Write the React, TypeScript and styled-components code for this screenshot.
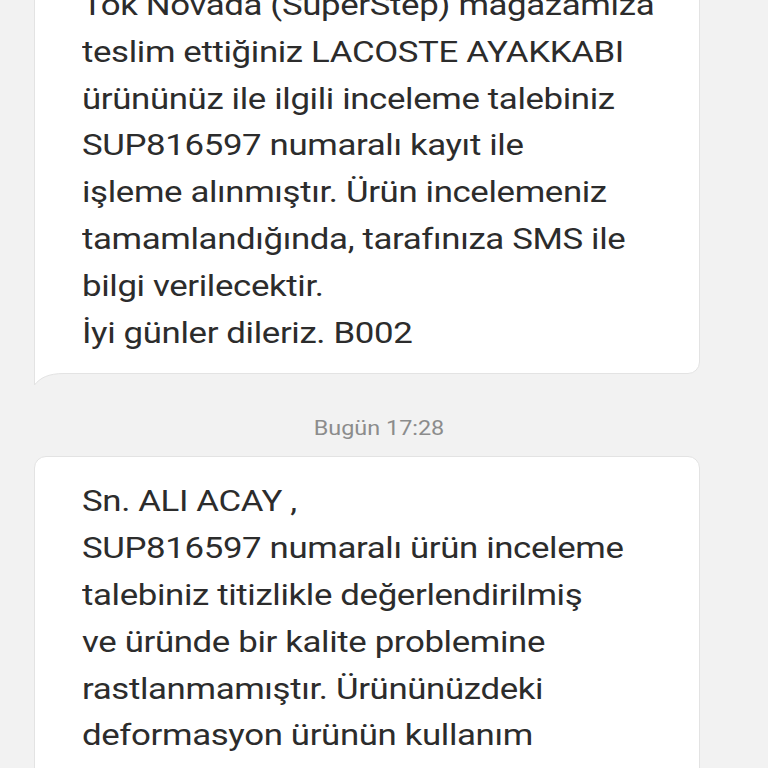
import React from "react";
import styled, { createGlobalStyle } from "styled-components";

const GlobalStyle = createGlobalStyle`
  html, body {
    margin: 0;
    padding: 0;
    background: #f2f2f2;
    overflow: hidden;
  }
  body {
    font-family: Roboto, "Noto Sans", sans-serif;
  }
`;

const firstMessage = [
  "Tok Novada (SuperStep) mağazamıza",
  "teslim ettiğiniz LACOSTE AYAKKABI",
  "ürününüz ile ilgili inceleme talebiniz",
  "SUP816597 numaralı kayıt ile",
  "işleme alınmıştır. Ürün incelemeniz",
  "tamamlandığında, tarafınıza SMS ile",
  "bilgi verilecektir.",
  "İyi günler dileriz. B002",
];

const secondMessage = [
  "Sn. ALI ACAY ,",
  "SUP816597 numaralı ürün inceleme",
  "talebiniz titizlikle değerlendirilmiş",
  "ve üründe bir kalite problemine",
  "rastlanmamıştır. Ürününüzdeki",
  "deformasyon ürünün kullanım",
  "hatasından kaynaklanmaktadır.",
];

const App = () => {
  return (
    <>
      <GlobalStyle />
      <Thread>
        <Bubble tail>
          {firstMessage.map((line) => (
            <Line key={line}>{line}</Line>
          ))}
          <Tail width="30" height="14" viewBox="0 0 30 14">
            <path
              d="M0 0 L0 13 C6 6 14 1.5 30 1.5 L30 0 Z"
              fill="#ffffff"
            />
            <path
              d="M0.5 0 L0.5 13 C6 6 14 1.5 30 1.5"
              fill="none"
              stroke="#e3e3e3"
              strokeWidth="1"
            />
          </Tail>
        </Bubble>
        <Stamp>Bugün 17:28</Stamp>
        <Bubble>
          {secondMessage.map((line) => (
            <Line key={line}>{line}</Line>
          ))}
        </Bubble>
      </Thread>
    </>
  );
};

export default App;

const Thread = styled.div`
  display: flex;
  flex-direction: column;
  align-items: flex-start;
  padding: 0 0 0 34px;
  margin-top: -40px;
`;

const Bubble = styled.div<{ tail?: boolean }>`
  position: relative;
  box-sizing: border-box;
  width: 666px;
  background: #ffffff;
  border: 1px solid #e3e3e3;
  border-radius: ${(props) => (props.tail ? "12px 12px 12px 0" : "12px")};
  padding: 21px 20px 17px 47px;
  color: #2c2c2c;
`;

const Line = styled.div`
  font-size: 29px;
  line-height: 46.8px;
  letter-spacing: -0.3px;
  white-space: nowrap;
  transform: scaleX(1.2);
  transform-origin: left center;
`;

const Tail = styled.svg`
  position: absolute;
  left: -1px;
  bottom: -13px;
  display: block;
`;

const Stamp = styled.div`
  box-sizing: border-box;
  width: 690px;
  text-align: center;
  font-size: 20px;
  color: #8c8c8c;
  padding: 42px 0 16px;
  line-height: 24px;
  transform: scaleX(1.17);
`;
